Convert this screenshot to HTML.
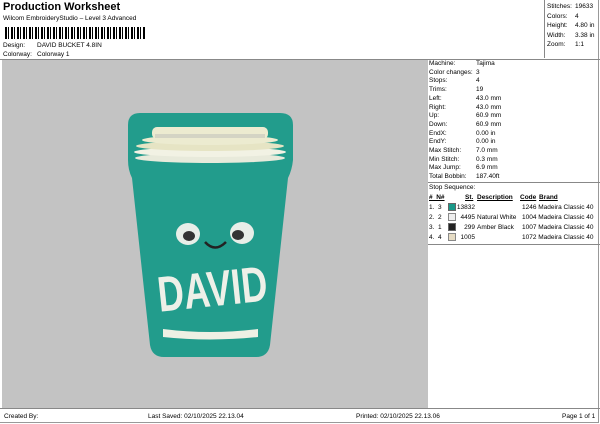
<!DOCTYPE html>
<html><head><style>
body{margin:0;width:600px;height:424px;background:#fff;font-family:"Liberation Sans",sans-serif;color:#000;position:relative;overflow:hidden}
.a{position:absolute;white-space:nowrap;font-size:6.5px}
</style></head><body>
<div class="a" style="left:3px;top:1px;font-size:11px;font-weight:bold">Production Worksheet</div>
<div class="a" style="left:3px;top:15px">Wilcom EmbroideryStudio – Level 3 Advanced</div>
<div style="position:absolute;left:5px;top:27px;width:140px;height:12px;background:repeating-linear-gradient(90deg,#000 0 2px,#fff 2px 3px,#000 3px 4px,#fff 4px 6px)"></div>
<div class="a" style="left:3px;top:42px">Design:</div><div class="a" style="left:37px;top:42px">DAVID BUCKET 4.8IN</div>
<div class="a" style="left:3px;top:51px">Colorway:</div><div class="a" style="left:37px;top:51px">Colorway 1</div>
<div style="position:absolute;left:0;top:0;width:599px;height:423px;border:1px solid #999;box-sizing:border-box;border-width:0 1px 1px 0"></div>
<div style="position:absolute;left:544px;top:0;width:1px;height:58px;background:#888"></div>
<div style="position:absolute;left:0;top:59px;width:600px;height:1px;background:#888"></div>
<div class="a" style="left:547px;top:2px;line-height:9.6px">Stitches:<br>Colors:<br>Height:<br>Width:<br>Zoom:</div>
<div class="a" style="left:575px;top:2px;line-height:9.6px">19633<br>4<br>4.80 in<br>3.38 in<br>1:1</div>
<div style="position:absolute;left:2px;top:60px;width:423px;height:348px;background:#c3c3c3"></div>
<div style="position:absolute;left:425px;top:60px;width:3px;height:348px;background:#c3c3c3"></div>
<svg style="position:absolute;left:0;top:0" width="600" height="424">
<path d="M140 113 L280 113 Q293 113 293 125 L293 160 Q292 170 288 178 L270 345 Q268 357 256 357 L164 357 Q152 357 150 345 L132 178 Q128 170 128 160 L128 125 Q128 113 140 113Z" fill="#229c8c"/>
<ellipse cx="210" cy="158" rx="75" ry="5" fill="#e8eadb"/>
<ellipse cx="210" cy="152" rx="76" ry="5" fill="#f2f2e4"/>
<ellipse cx="210" cy="146" rx="74" ry="5" fill="#e6e4c4"/>
<ellipse cx="210" cy="140" rx="68" ry="5" fill="#ecebd0"/>
<rect x="152" y="127" width="116" height="12" rx="5" fill="#ecebd0"/>
<rect x="155" y="134" width="110" height="4" fill="#d4d4c4"/>
<ellipse cx="188" cy="234" rx="12" ry="11" fill="#e8eee8"/>
<ellipse cx="242" cy="233" rx="12" ry="11" fill="#e8eee8"/>
<ellipse cx="189" cy="236" rx="6" ry="5" fill="#333"/>
<ellipse cx="238" cy="235" rx="6" ry="5" fill="#333"/>
<path d="M205 242 Q215 253 226 242" stroke="#222" stroke-width="2.5" fill="none"/>
<g transform="rotate(-6 212 285)">
<text x="212" y="304" text-anchor="middle" font-family="Liberation Sans" font-weight="bold" font-size="48" fill="#eef0e8" textLength="110" lengthAdjust="spacingAndGlyphs" transform="translate(0 -10) scale(1 1.04)">DAVID</text>
</g>
<path d="M163 329 Q210 335 258 329 L258 337 Q210 342 163 337Z" fill="#eef0e4"/>
</svg>
<div class="a" style="left:429px;top:60px;line-height:8.7px">Machine:<br>Color changes:<br>Stops:<br>Trims:<br>Left:<br>Right:<br>Up:<br>Down:<br>EndX:<br>EndY:<br>Max Stitch:<br>Min Stitch:<br>Max Jump:<br>Total Bobbin:</div>
<div class="a" style="left:476px;top:60px;line-height:8.7px">Tajima<br>3<br>4<br>19<br>43.0 mm<br>43.0 mm<br>60.9 mm<br>60.9 mm<br>0.00 in<br>0.00 in<br>7.0 mm<br>0.3 mm<br>6.9 mm<br>187.40ft</div>
<div style="position:absolute;left:428px;top:182px;width:172px;height:1px;background:#888"></div>
<div class="a" style="left:429px;top:184px">Stop Sequence:</div>
<div class="a" style="left:429px;top:194px;font-weight:bold;text-decoration:underline">#&nbsp; N#</div>
<div class="a" style="left:465px;top:194px;font-weight:bold;text-decoration:underline">St.</div>
<div class="a" style="left:477px;top:194px;font-weight:bold;text-decoration:underline">Description</div>
<div class="a" style="left:520px;top:194px;font-weight:bold;text-decoration:underline">Code</div>
<div class="a" style="left:539px;top:194px;font-weight:bold;text-decoration:underline">Brand</div>
<div class="a" style="left:429px;top:203px;line-height:10px">1.&nbsp; 3<br>2.&nbsp; 2<br>3.&nbsp; 1<br>4.&nbsp; 4</div>
<div style="position:absolute;left:448px;top:203px;width:6px;height:6px;background:#1a9a8a;border:1px solid #666"></div>
<div style="position:absolute;left:448px;top:213px;width:6px;height:6px;background:#eee;border:1px solid #888"></div>
<div style="position:absolute;left:448px;top:223px;width:6px;height:6px;background:#222;border:1px solid #666"></div>
<div style="position:absolute;left:448px;top:233px;width:6px;height:6px;background:#e6dcc4;border:1px solid #888"></div>
<div class="a" style="left:455px;top:203px;width:20px;text-align:right;line-height:10px">13832<br>4495<br>299<br>1005</div>
<div class="a" style="left:477px;top:203px;line-height:10px"><br>Natural White<br>Amber Black<br></div>
<div class="a" style="left:522px;top:203px;line-height:10px">1246 Madeira Classic 40<br>1004 Madeira Classic 40<br>1007 Madeira Classic 40<br>1072 Madeira Classic 40</div>
<div style="position:absolute;left:428px;top:244px;width:172px;height:1px;background:#888"></div>
<div style="position:absolute;left:0;top:408px;width:600px;height:1px;background:#888"></div>
<div class="a" style="left:4px;top:413px">Created By:</div>
<div class="a" style="left:148px;top:413px">Last Saved: 02/10/2025 22.13.04</div>
<div class="a" style="left:356px;top:413px">Printed: 02/10/2025 22.13.06</div>
<div class="a" style="left:562px;top:413px">Page 1 of 1</div>
</body></html>
